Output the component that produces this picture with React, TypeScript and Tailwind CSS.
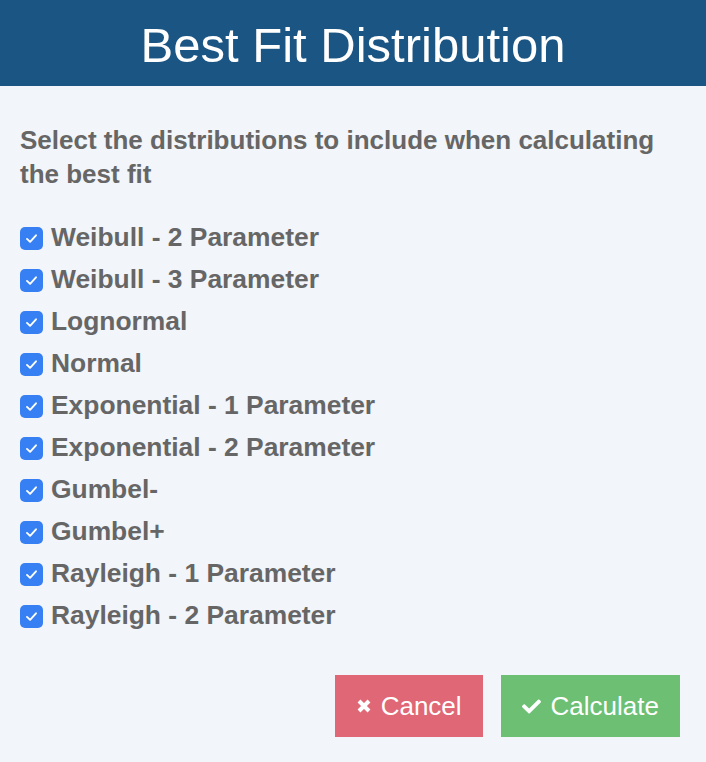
import { FaCheck } from 'react-icons/fa';

const distributions = [
  'Weibull - 2 Parameter',
  'Weibull - 3 Parameter',
  'Lognormal',
  'Normal',
  'Exponential - 1 Parameter',
  'Exponential - 2 Parameter',
  'Gumbel-',
  'Gumbel+',
  'Rayleigh - 1 Parameter',
  'Rayleigh - 2 Parameter',
];

const CheckBox = () => (
  <span className="flex h-[23px] w-[23px] shrink-0 items-center justify-center rounded-[5px] bg-[#3680f4]">
    <svg viewBox="0 0 16 16" className="h-[15px] w-[15px]" fill="none">
      <path
        d="M3.2 8.4 6.5 11.6 12.8 4.6"
        stroke="white"
        strokeWidth="2"
        strokeLinecap="round"
        strokeLinejoin="round"
      />
    </svg>
  </span>
);

export default function App() {
  return (
    <div className="min-h-[762px] w-[706px] bg-[#f2f5f9] font-['Liberation_Sans',Arial,sans-serif]">
      <div className="flex h-[86px] items-center justify-center bg-[#1b5583]">
        <h1 className="pt-[4px] text-[49px] leading-none text-white">Best Fit Distribution</h1>
      </div>

      <div className="px-[20px] pt-[37px]">
        <p className="text-[26px] font-bold leading-[34px] text-[#666]">
          Select the distributions to include when calculating the best fit
        </p>

        <div className="mt-[26px] flex flex-col">
          {distributions.map((d) => (
            <label key={d} className="flex h-[42px] items-center gap-[8px]">
              <CheckBox />
              <span className="text-[26.4px] font-bold text-[#666]">{d}</span>
            </label>
          ))}
        </div>

        <div className="mt-[38px] flex justify-end gap-[18px] pr-[6px] pb-[26px]">
          <button className="flex h-[62px] items-center gap-[9px] bg-[#e06776] px-[21px] text-[26px] text-white">
            <svg viewBox="0 0 16 16" className="h-[16px] w-[16px]" fill="none">
              <path d="M3 3 13 13 M13 3 3 13" stroke="white" strokeWidth="4" />
            </svg>
            Cancel
          </button>
          <button className="flex h-[62px] items-center gap-[10px] bg-[#6cbf73] px-[21px] text-[26px] text-white">
            <FaCheck className="h-[19px] w-[19px]" />
            Calculate
          </button>
        </div>
      </div>
    </div>
  );
}
